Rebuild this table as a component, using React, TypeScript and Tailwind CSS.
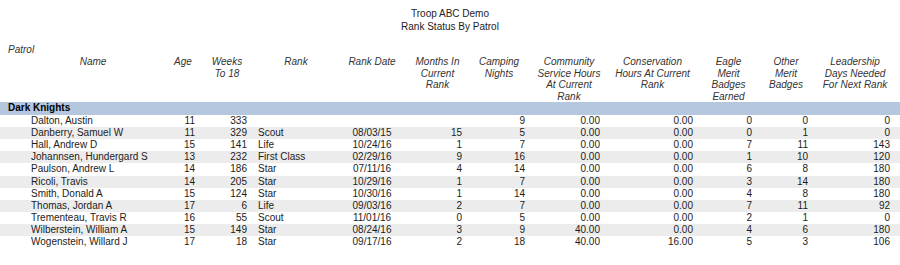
import React from "react"

type Scout = {
  name: string
  age: number
  weeks: number
  rank: string
  date: string
  months: string
  camping: number
  community: string
  conservation: string
  eagle: number
  other: number
  leadership: number
}

const scouts: Scout[] = [
  { name: "Dalton, Austin", age: 11, weeks: 333, rank: "", date: "", months: "", camping: 9, community: "0.00", conservation: "0.00", eagle: 0, other: 0, leadership: 0 },
  { name: "Danberry, Samuel W", age: 11, weeks: 329, rank: "Scout", date: "08/03/15", months: "15", camping: 5, community: "0.00", conservation: "0.00", eagle: 0, other: 1, leadership: 0 },
  { name: "Hall, Andrew D", age: 15, weeks: 141, rank: "Life", date: "10/24/16", months: "1", camping: 7, community: "0.00", conservation: "0.00", eagle: 7, other: 11, leadership: 143 },
  { name: "Johannsen, Hundergard S", age: 13, weeks: 232, rank: "First Class", date: "02/29/16", months: "9", camping: 16, community: "0.00", conservation: "0.00", eagle: 1, other: 10, leadership: 120 },
  { name: "Paulson, Andrew L", age: 14, weeks: 186, rank: "Star", date: "07/11/16", months: "4", camping: 14, community: "0.00", conservation: "0.00", eagle: 6, other: 8, leadership: 180 },
  { name: "Ricoli, Travis", age: 14, weeks: 205, rank: "Star", date: "10/29/16", months: "1", camping: 7, community: "0.00", conservation: "0.00", eagle: 3, other: 14, leadership: 180 },
  { name: "Smith, Donald A", age: 15, weeks: 124, rank: "Star", date: "10/30/16", months: "1", camping: 14, community: "0.00", conservation: "0.00", eagle: 4, other: 8, leadership: 180 },
  { name: "Thomas, Jordan A", age: 17, weeks: 6, rank: "Life", date: "09/03/16", months: "2", camping: 7, community: "0.00", conservation: "0.00", eagle: 7, other: 11, leadership: 92 },
  { name: "Trementeau, Travis R", age: 16, weeks: 55, rank: "Scout", date: "11/01/16", months: "0", camping: 5, community: "0.00", conservation: "0.00", eagle: 2, other: 1, leadership: 0 },
  { name: "Wilberstein, William A", age: 15, weeks: 149, rank: "Star", date: "08/24/16", months: "3", camping: 9, community: "40.00", conservation: "0.00", eagle: 4, other: 6, leadership: 180 },
  { name: "Wogenstein, Willard J", age: 17, weeks: 18, rank: "Star", date: "09/17/16", months: "2", camping: 18, community: "40.00", conservation: "16.00", eagle: 5, other: 3, leadership: 106 },
]

// column boundaries: 8 | 170 | 196 | 250 | 330 | 410 | 465 | 530 | 605 | 700 | 757 | 815 | 895
const cols = "grid grid-cols-[162px_26px_54px_80px_80px_55px_65px_75px_95px_57px_58px_80px]"

function Head({ lines, className = "" }: { lines: string[]; className?: string }) {
  return (
    <div className={`text-center ${className}`}>
      {lines.map(line => (
        <div key={line} className="whitespace-nowrap">
          {line}
        </div>
      ))}
    </div>
  )
}

export default function App() {
  return (
    <div className="w-[900px] h-[265px] bg-white text-[10px] text-[#1c1c1c] font-['Liberation_Sans',Arial,sans-serif] overflow-hidden">
      <div className="pt-[8px] text-center leading-[12.5px] text-[#222]">
        <div>Troop ABC Demo</div>
        <div>Rank Status By Patrol</div>
      </div>

      <div className="mt-[11px] pl-[8px] italic text-[#333] leading-[11.6px]">
        <div className="h-[12px] leading-[12px]">Patrol</div>
        <div className={`${cols} h-[46px]`}>
          <Head lines={["Name"]} className="pl-[8px]" />
          <Head lines={["Age"]} />
          <Head lines={["Weeks", "To 18"]} className="pl-[8px]" />
          <Head lines={["Rank"]} className="pl-[12px]" />
          <Head lines={["Rank Date"]} className="pl-[4px]" />
          <Head lines={["Months In", "Current", "Rank"]} />
          <Head lines={["Camping", "Nights"]} className="pl-[3px]" />
          <Head lines={["Community", "Service Hours", "At Current", "Rank"]} className="pl-[3px]" />
          <Head lines={["Conservation", "Hours At Current", "Rank"]} />
          <Head lines={["Eagle", "Merit", "Badges", "Earned"]} />
          <Head lines={["Other", "Merit", "Badges"]} />
          <Head lines={["Leadership", "Days Needed", "For Next Rank"]} />
        </div>
      </div>

      <div className="h-[12.6px] leading-[12.6px] bg-[#b4c7df] pl-[8px] font-bold text-black">
        Dark Knights
      </div>

      {scouts.map((s, i) => (
        <div
          key={s.name}
          className={`${cols} pl-[8px] h-[12.2px] leading-[12.2px] ${i % 2 === 1 ? "bg-[#ececec]" : "bg-white"}`}
        >
          <div className="pl-[23px] whitespace-nowrap">{s.name}</div>
          <div className="text-right pr-[1px]">{s.age}</div>
          <div className="text-right pr-[3px]">{s.weeks}</div>
          <div className="pl-[8px] whitespace-nowrap">{s.rank}</div>
          <div className="text-center pl-[4px]">{s.date}</div>
          <div className="text-right pr-[3px]">{s.months}</div>
          <div className="text-right pr-[5px]">{s.camping}</div>
          <div className="text-right pr-[5px]">{s.community}</div>
          <div className="text-right pr-[7px]">{s.conservation}</div>
          <div className="text-right pr-[5px]">{s.eagle}</div>
          <div className="text-right pr-[7px]">{s.other}</div>
          <div className="text-right pr-[5px]">{s.leadership}</div>
        </div>
      ))}
    </div>
  )
}
